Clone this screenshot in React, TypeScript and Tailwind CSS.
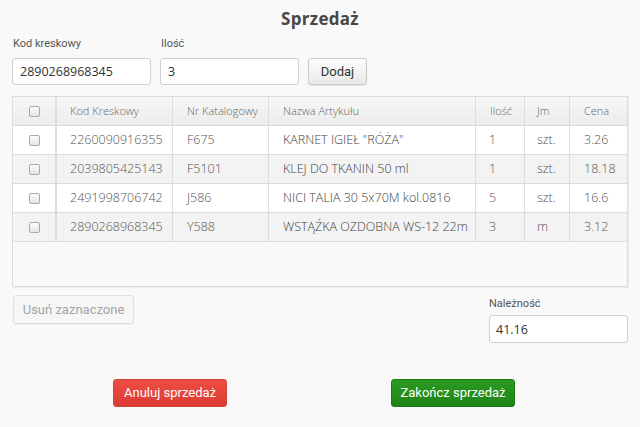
import { useState } from "react";

interface Item {
   id: number;
   kod: string;
   nr: string;
   nazwa: string;
   ilosc: number;
   jm: string;
   cena: string;
}

const items: Item[] = [
   { id: 1, kod: "2260090916355", nr: "F675", nazwa: 'KARNET IGIEŁ "RÓŻA"', ilosc: 1, jm: "szt.", cena: "3.26" },
   { id: 2, kod: "2039805425143", nr: "F5101", nazwa: "KLEJ DO TKANIN 50 ml", ilosc: 1, jm: "szt.", cena: "18.18" },
   { id: 3, kod: "2491998706742", nr: "J586", nazwa: "NICI TALIA 30 5x70M kol.0816", ilosc: 5, jm: "szt.", cena: "16.6" },
   { id: 4, kod: "2890268968345", nr: "Y588", nazwa: "WSTĄŹKA OZDOBNA WS-12 22m", ilosc: 3, jm: "m", cena: "3.12" },
];

const cols = "grid grid-cols-[44px_116px_96px_207px_49px_45px_57px]";

const Checkbox = () => (
   <div className="w-[11px] h-[11px] rounded-[2px] border border-[#a9a9a9] bg-gradient-to-b from-[#fdfdfd] to-[#e4e4e4]" />
);

const App = () => {
   const [kod, setKod] = useState("2890268968345");
   const [ilosc, setIlosc] = useState("3");

   return (
      <div className="w-[640px] h-[427px] bg-[#f9f9f9] px-3 font-['Open_Sans',sans-serif] text-[#333] overflow-hidden">
         <h1 className="pt-[6px] h-[36px] text-center text-[17px] font-bold text-[#474747] tracking-[0.3px]">Sprzedaż</h1>

         {/* Form */}
         <div className="flex items-end gap-[9px]">
            <label className="flex flex-col w-[139px]">
               <span className="font-['Roboto',sans-serif] text-[11px] leading-[16px] mb-[6px] ml-[1px] text-[#555]">Kod kreskowy</span>
               <input
                  value={kod}
                  onChange={(e) => setKod(e.target.value)}
                  className="h-[27px] px-[7px] text-[12.5px] text-[#333] bg-white border border-[#cfcfcf] rounded-[3px] outline-none"
               />
            </label>
            <label className="flex flex-col w-[139px]">
               <span className="font-['Roboto',sans-serif] text-[11px] leading-[16px] mb-[6px] ml-[1px] text-[#555]">Ilość</span>
               <input
                  value={ilosc}
                  onChange={(e) => setIlosc(e.target.value)}
                  className="h-[27px] px-[7px] text-[12.5px] text-[#333] bg-white border border-[#cfcfcf] rounded-[3px] outline-none"
               />
            </label>
            <button className="h-[27px] w-[59px] font-['Roboto',sans-serif] text-[13px] text-[#333] border border-[#c8c8c8] rounded-[3px] bg-gradient-to-b from-[#fdfdfd] to-[#e9e9e9] shadow-[0_1px_1px_rgba(0,0,0,0.08)]">
               Dodaj
            </button>
         </div>

         {/* Table */}
         <div className="mt-[11px] h-[191px] border border-[#dcdcdc] bg-[#f9f9f9] shadow-[1px_1px_1px_rgba(0,0,0,0.05)] font-light text-[#555]">
            <div className={`${cols} h-[29px] bg-gradient-to-b from-[#f7f7f7] to-[#ececec] border-b border-[#d9d9d9] text-[11px] text-[#666]`}>
               <div className="flex items-center justify-center border-r-2 border-[#dcdcdc]">
                  <Checkbox />
               </div>
               <div className="flex items-center pl-[13px] border-r border-[#dcdcdc]">Kod Kreskowy</div>
               <div className="flex items-center pl-[14px] border-r border-[#dcdcdc]">Nr Katalogowy</div>
               <div className="flex items-center pl-[14px] border-r border-[#dcdcdc]">Nazwa Artykułu</div>
               <div className="flex items-center pl-[14px] border-r border-[#dcdcdc]">Ilość</div>
               <div className="flex items-center pl-[12px] border-r border-[#dcdcdc]">Jm</div>
               <div className="flex items-center pl-[14px]">Cena</div>
            </div>
            {items.map((item, i) => (
               <div
                  key={item.id}
                  className={`${cols} h-[29px] border-b border-[#dcdcdc] text-[12.5px] ${i % 2 === 0 ? "bg-white" : "bg-[#f3f3f3]"}`}
               >
                  <div className="flex items-center justify-center border-r-2 border-[#dcdcdc]">
                     <Checkbox />
                  </div>
                  <div className="flex items-center pl-[13px] border-r border-[#dcdcdc]">{item.kod}</div>
                  <div className="flex items-center pl-[14px] border-r border-[#dcdcdc]">{item.nr}</div>
                  <div className="flex items-center pl-[14px] border-r border-[#dcdcdc] text-[#444]">{item.nazwa}</div>
                  <div className="flex items-center pl-[13px] border-r border-[#dcdcdc]">{item.ilosc}</div>
                  <div className="flex items-center pl-[12px] border-r border-[#dcdcdc]">{item.jm}</div>
                  <div className="flex items-center pl-[14px]">{item.cena}</div>
               </div>
            ))}
         </div>

         {/* Under table */}
         <div className="mt-[8px] flex justify-between">
            <button
               disabled
               className="h-[29px] w-[121px] ml-[1px] whitespace-nowrap font-['Roboto',sans-serif] text-[13px] text-[#a4a4a4] border border-[#e0e0e0] rounded-[3px] bg-[#f6f6f6] shadow-[0_1px_1px_rgba(0,0,0,0.05)]"
            >
               Usuń zaznaczone
            </button>
            <label className="flex flex-col w-[139px]">
               <span className="font-['Roboto',sans-serif] text-[11px] leading-[16px] mt-[1px] mb-[3px] text-[#555]">Należność</span>
               <input
                  readOnly
                  value="41.16"
                  className="h-[28px] px-[6px] text-[12.5px] text-[#333] bg-white border border-[#cfcfcf] rounded-[3px] outline-none"
               />
            </label>
         </div>

         {/* Actions */}
         <div className="mt-[36px] flex font-['Roboto',sans-serif]">
            <button className="ml-[101px] h-[28px] w-[114px] whitespace-nowrap text-[13px] text-white rounded-[3px] border border-[#d0453a] bg-gradient-to-b from-[#ee4d44] to-[#db3b32]">
               Anuluj sprzedaż
            </button>
            <button className="ml-[164px] h-[28px] w-[124px] whitespace-nowrap text-[13px] text-white rounded-[3px] border border-[#1f7a16] bg-gradient-to-b from-[#2a9a21] to-[#1f8418]">
               Zakończ sprzedaż
            </button>
         </div>
      </div>
   );
};

export default App;
